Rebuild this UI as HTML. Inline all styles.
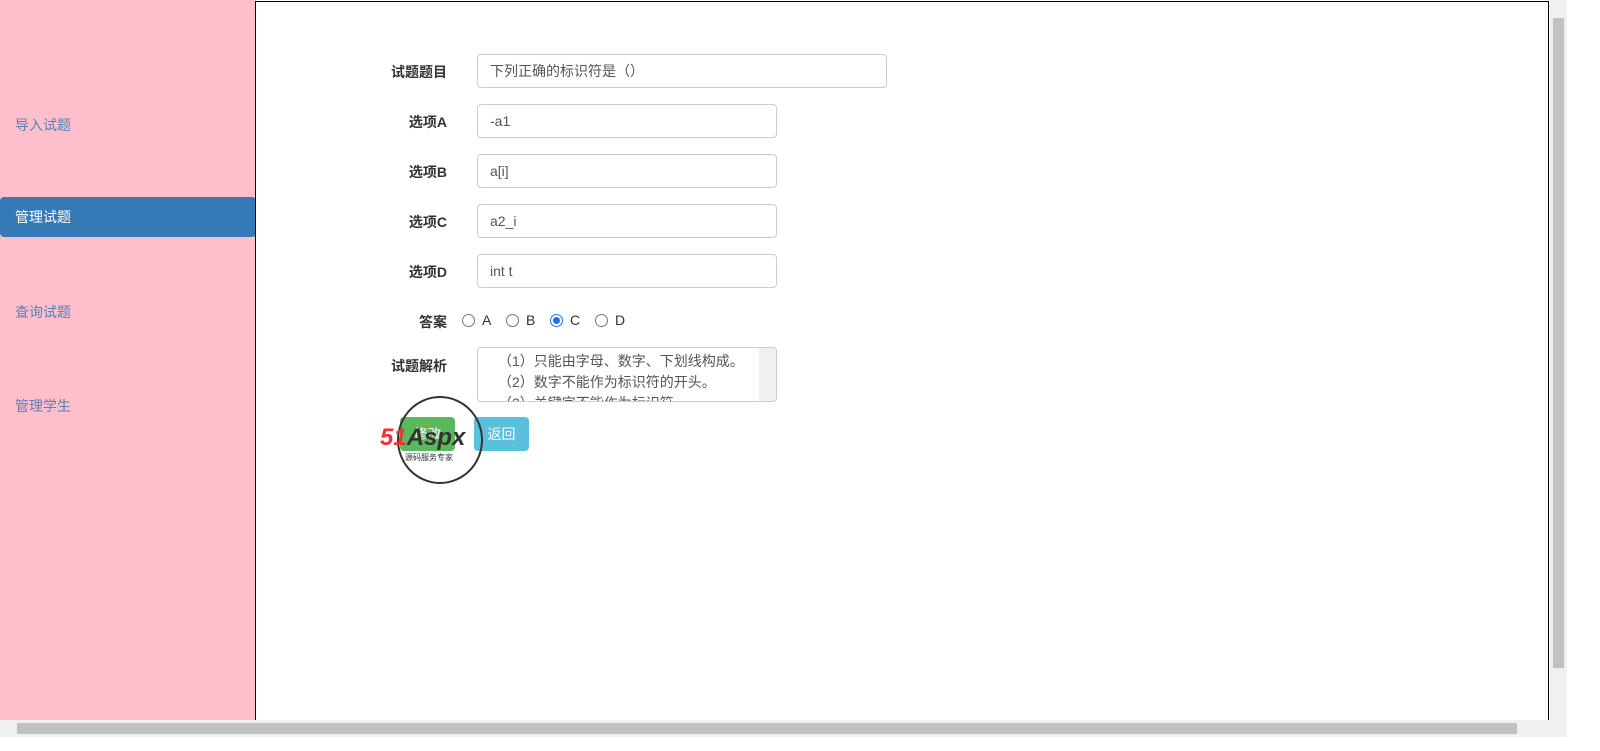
<!DOCTYPE html>
<html><head><meta charset="utf-8"><style>
body{margin:0;width:1600px;height:751px;position:relative;overflow:hidden;background:#fff;font-family:"Liberation Sans","Noto Sans CJK SC",sans-serif;font-size:14px;color:#333}
.side{position:absolute;left:0;top:0;width:256px;height:720px;background:#ffc0cb}
.nav{position:absolute;left:15px;color:#5b7fb8;font-size:14px}
.act{position:absolute;left:0;top:197px;width:256px;height:40px;background:#337ab7;border-radius:4px;color:#fff;line-height:40px;padding-left:15px;box-sizing:border-box}
.main{position:absolute;left:255px;top:1px;width:1294px;height:719px;border:1px solid #000;border-bottom:none;box-sizing:border-box}
.lab{position:absolute;width:120px;text-align:right;font-weight:bold;left:327px}
.inp{position:absolute;left:477px;height:34px;border:1px solid #ccc;border-radius:4px;box-sizing:border-box;padding:0 12px;line-height:32px;font-size:14px;color:#555}
.rad{position:absolute;top:314px;width:11px;height:11px;border:1px solid #777;border-radius:50%}
.rl{position:absolute;top:312px;font-size:14px}
.vs{position:absolute;left:1550px;top:0;width:17px;height:720px;background:#f0f0f0}
.hs{position:absolute;left:0;top:720px;width:1567px;height:17px;background:#f0f0f0}
</style></head><body>
<div class="side">
<div class="nav" style="top:115px">导入试题</div>
<div class="act">管理试题</div>
<div class="nav" style="top:302px">查询试题</div>
<div class="nav" style="top:396px">管理学生</div>
</div>
<div class="main"></div>
<div class="lab" style="top:62px">试题题目</div>
<div class="inp" style="top:54px;width:410px">下列正确的标识符是（）</div>
<div class="lab" style="top:112px">选项A</div>
<div class="inp" style="top:104px;width:300px">-a1</div>
<div class="lab" style="top:162px">选项B</div>
<div class="inp" style="top:154px;width:300px">a[i]</div>
<div class="lab" style="top:212px">选项C</div>
<div class="inp" style="top:204px;width:300px">a2_i</div>
<div class="lab" style="top:262px">选项D</div>
<div class="inp" style="top:254px;width:300px">int t</div>
<div class="lab" style="top:312px">答案</div>
<div class="rad" style="left:462px"></div><div class="rl" style="left:482px">A</div>
<div class="rad" style="left:506px"></div><div class="rl" style="left:526px">B</div>
<div class="rad" style="left:550px;border-color:#1a73e8"><div style="width:7px;height:7px;border-radius:50%;background:#1a73e8;margin:2px"></div></div><div class="rl" style="left:570px">C</div>
<div class="rad" style="left:595px"></div><div class="rl" style="left:615px">D</div>
<div class="lab" style="top:356px">试题解析</div>
<div style="position:absolute;left:477px;top:347px;width:300px;height:55px;border:1px solid #ccc;border-radius:4px;box-sizing:border-box;overflow:hidden;font-size:14px;color:#555;line-height:21px;padding:3px 20px 0 20px">（1）只能由字母、数字、下划线构成。<br>（2）数字不能作为标识符的开头。<br>（3）关键字不能作为标识符。
<div style="position:absolute;right:0;top:0;width:17px;height:53px;background:#f0f0f0"></div></div>
<div style="position:absolute;left:400px;top:417px;width:55px;height:34px;background:#5cb85c;border-radius:4px;color:#fff;line-height:34px;text-align:center">修改</div>
<div style="position:absolute;left:474px;top:417px;width:55px;height:34px;background:#5bc0de;border-radius:4px;color:#fff;line-height:34px;text-align:center">返回</div>
<div style="position:absolute;left:397px;top:396px;width:82px;height:84px;border:2px solid #333;border-radius:50%"></div>
<div style="position:absolute;left:380px;top:424px;font-size:24px;font-weight:bold;font-style:italic;color:#e33">51<span style="color:#333">Aspx</span></div>
<div style="position:absolute;left:405px;top:452px;font-size:8px;color:#333;background:#fff">源码服务专家</div>
<div class="vs"><div style="position:absolute;left:3px;top:18px;width:11px;height:650px;background:#c1c1c1"></div></div>
<div class="hs"><div style="position:absolute;left:17px;top:3px;width:1500px;height:11px;background:#c1c1c1"></div></div>
</body></html>
